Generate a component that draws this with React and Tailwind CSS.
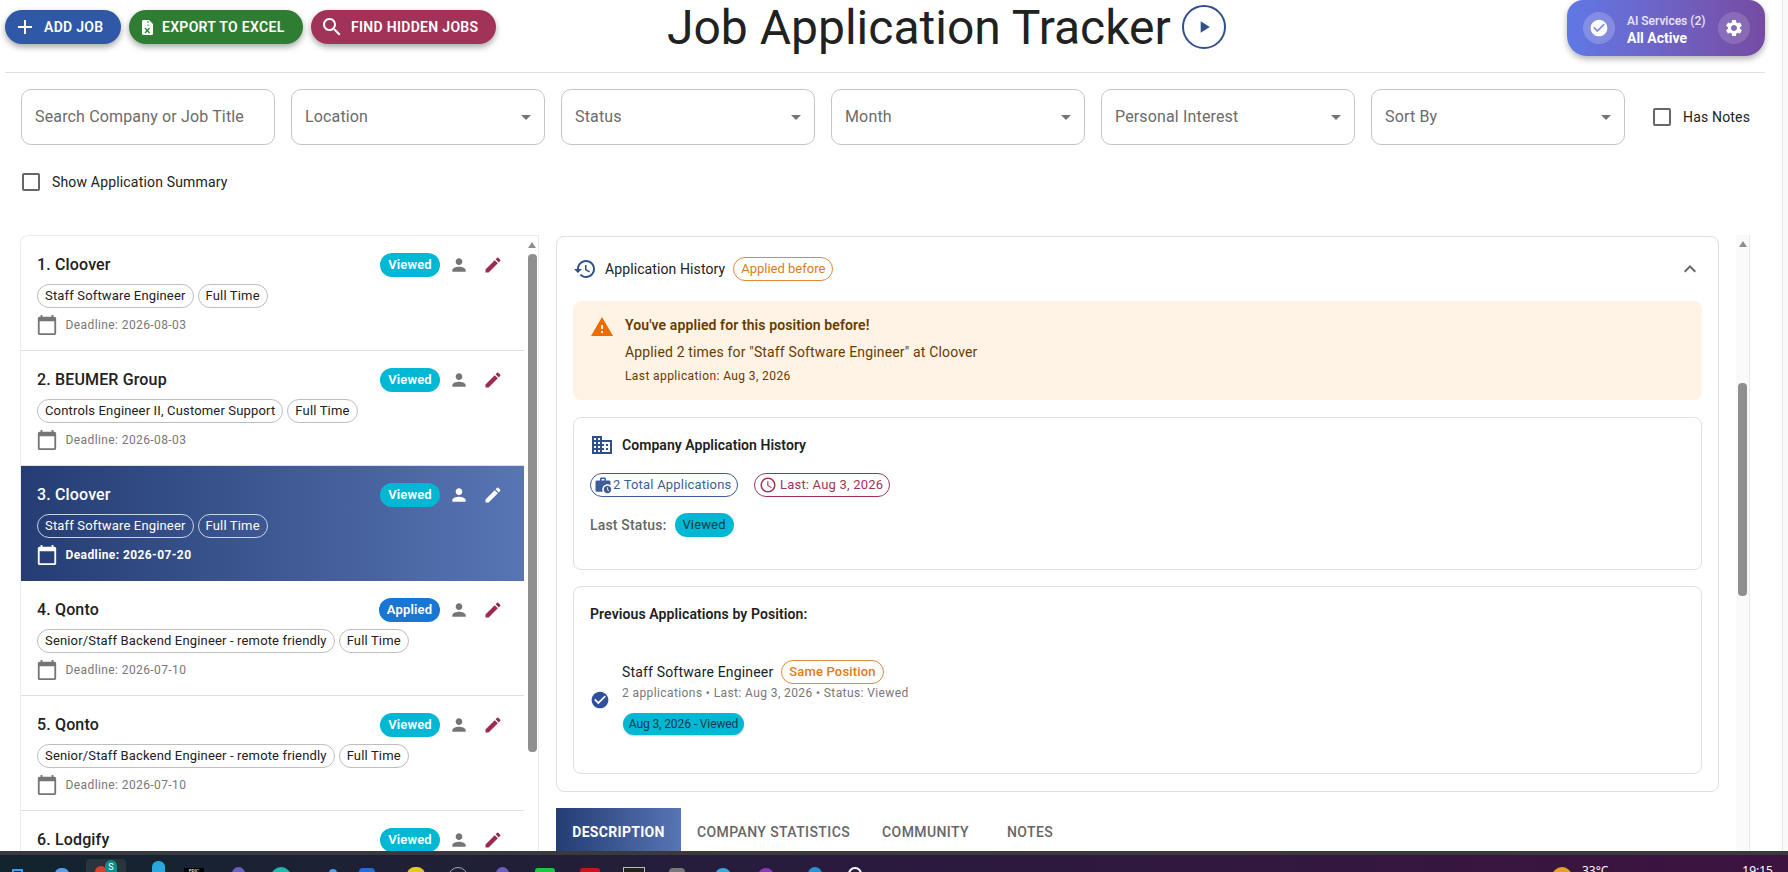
import React from "react";

const P = {
  add: "M19 13h-6v6h-2v-6H5v-2h6V5h2v6h6v2z",
  search: "M15.5 14h-.79l-.28-.27C15.41 12.59 16 11.11 16 9.5 16 5.91 13.09 3 9.5 3S3 5.91 3 9.5 5.91 16 9.5 16c1.61 0 3.09-.59 4.23-1.57l.27.28v.79l5 4.99L20.49 19l-4.99-5zm-6 0C7.01 14 5 11.99 5 9.5S7.01 5 9.5 5 14 7.01 14 9.5 11.99 14 9.5 14z",
  person: "M12 12c2.21 0 4-1.79 4-4s-1.79-4-4-4-4 1.79-4 4 1.79 4 4 4zm0 2c-2.67 0-8 1.34-8 4v2h16v-2c0-2.66-5.33-4-8-4z",
  edit: "M3 17.25V21h3.75L17.81 9.94l-3.75-3.75L3 17.25zM20.71 7.04c.39-.39.39-1.02 0-1.41l-2.34-2.34a.9959.9959 0 0 0-1.41 0l-1.83 1.83 3.75 3.75 1.83-1.83z",
  cal: "M20 3h-1V1h-2v2H7V1H5v2H4c-1.1 0-2 .9-2 2v16c0 1.1.9 2 2 2h16c1.1 0 2-.9 2-2V5c0-1.1-.9-2-2-2zm0 18H4V8h16v13z",
  history: "M13 3c-4.97 0-9 4.03-9 9H1l3.89 3.89.07.14L9 12H6c0-3.87 3.13-7 7-7s7 3.13 7 7-3.13 7-7 7c-1.93 0-3.68-.79-4.94-2.06l-1.42 1.42C8.27 19.99 10.51 21 13 21c4.97 0 9-4.03 9-9s-4.03-9-9-9zm-1 5v5l4.28 2.54.72-1.21-3.5-2.08V8H12z",
  less: "M12 8l-6 6 1.41 1.41L12 10.83l4.59 4.58L18 14z",
  warn: "M1 21h22L12 2 1 21zm12-3h-2v-2h2v2zm0-4h-2v-4h2v4z",
  biz: "M12 7V3H2v18h20V7H12zM6 19H4v-2h2v2zm0-4H4v-2h2v2zm0-4H4V9h2v2zm0-4H4V5h2v2zm4 12H8v-2h2v2zm0-4H8v-2h2v2zm0-4H8V9h2v2zm0-4H8V5h2v2zm10 12h-8v-2h2v-2h-2v-2h2v-2h-2V9h8v10zm-2-8h-2v2h2v-2zm0 4h-2v2h2v-2z",
  work: "M18 11c1.49 0 2.87.47 4 1.26V8c0-1.11-.89-2-2-2h-4V4c0-1.11-.89-2-2-2h-4c-1.11 0-2 .89-2 2v2H4c-1.11 0-1.99.89-1.99 2L2 19c0 1.11.89 2 2 2h7.68c-.43-.91-.68-1.92-.68-3 0-3.87 3.13-7 7-7zm-8-7h4v2h-4V4zM18 13c-2.76 0-5 2.24-5 5s2.24 5 5 5 5-2.24 5-5-2.24-5-5-5zm1.65 7.35L17.5 18.2V15h1v2.79l1.85 1.85-.7.71z",
  clock: "M11.99 2C6.47 2 2 6.48 2 12s4.47 10 9.99 10C17.52 22 22 17.52 22 12S17.52 2 11.99 2zM12 20c-4.42 0-8-3.58-8-8s3.58-8 8-8 8 3.58 8 8-3.58 8-8 8zm.5-13H11v6l5.25 3.15.75-1.23-4.5-2.67z",
  check: "M12 2C6.48 2 2 6.48 2 12s4.48 10 10 10 10-4.48 10-10S17.52 2 12 2zm-2 15l-5-5 1.41-1.41L10 14.17l7.59-7.59L19 8l-9 9z",
  gear: "M19.14 12.94c.04-.3.06-.61.06-.94 0-.32-.02-.64-.07-.94l2.03-1.58c.18-.14.23-.41.12-.61l-1.92-3.32c-.12-.22-.37-.29-.59-.22l-2.39.96c-.5-.38-1.03-.7-1.62-.94l-.36-2.54c-.04-.24-.24-.41-.48-.41h-3.84c-.24 0-.43.17-.47.41l-.36 2.54c-.59.24-1.13.57-1.62.94l-2.39-.96c-.22-.08-.47 0-.59.22L2.74 8.87c-.12.21-.08.47.12.61l2.03 1.58c-.05.3-.09.63-.09.94s.02.64.07.94l-2.03 1.58c-.18.14-.23.41-.12.61l1.92 3.32c.12.22.37.29.59.22l2.39-.96c.5.38 1.03.7 1.62.94l.36 2.54c.05.24.24.41.48.41h3.84c.24 0 .44-.17.47-.41l.36-2.54c.59-.24 1.13-.56 1.62-.94l2.39.96c.22.08.47 0 .59-.22l1.92-3.32c.12-.22.07-.47-.12-.61l-2.01-1.58zM12 15.6c-1.98 0-3.6-1.62-3.6-3.6s1.62-3.6 3.6-3.6 3.6 1.62 3.6 3.6-1.62 3.6-3.6 3.6z",
  play: "M8 5v14l11-7z",
  drop: "M7 10l5 5 5-5z",
};

const Icon = ({ d, className }) => (
  <svg viewBox="0 0 24 24" fill="currentColor" className={"shrink-0 " + className}>
    <path d={d} />
  </svg>
);

const ExcelIcon = () => (
  <svg viewBox="0 0 11 15" className="w-[11px] h-[15px] shrink-0">
    <path d="M0 1.5C0 .7.6 0 1.4 0H7l4 4v9.5c0 .8-.6 1.5-1.4 1.5H1.4C.6 15 0 14.3 0 13.5z" fill="#fff" />
    <path d="M3 8l4.6 5M7.6 8L3 13" stroke="#2e7d32" strokeWidth="1.3" fill="none" />
    <path d="M6 1v2M6 4.5v1.5" stroke="#2e7d32" strokeWidth="1" fill="none" />
  </svg>
);

const Field = ({ label, search }) => (
  <div className="w-[254px] h-[56px] shrink-0 border border-[#c4c4c4] rounded-[10px] flex items-center justify-between pl-[13px] pr-[6px] text-[16px] tracking-[0.15px] text-[#6b6b6b]">
    <span>{label}</span>
    {!search && <Icon d={P.drop} className="w-[24px] h-[24px] text-[#757575]" />}
  </div>
);

const Box = () => <div className="w-[18px] h-[18px] border-2 border-[#666] rounded-[2px] shrink-0" />;

const jobs = [
  { t: "1. Cloover", role: "Staff Software Engineer", d: "2026-08-03", s: "Viewed" },
  { t: "2. BEUMER Group", role: "Controls Engineer II, Customer Support", d: "2026-08-03", s: "Viewed" },
  { t: "3. Cloover", role: "Staff Software Engineer", d: "2026-07-20", s: "Viewed", sel: true },
  { t: "4. Qonto", role: "Senior/Staff Backend Engineer - remote friendly", d: "2026-07-10", s: "Applied" },
  { t: "5. Qonto", role: "Senior/Staff Backend Engineer - remote friendly", d: "2026-07-10", s: "Viewed" },
  { t: "6. Lodgify", s: "Viewed", partial: true },
];

const JobRow = ({ j }) => {
  const chip = j.sel
    ? "h-[24px] px-[7px] flex items-center rounded-full border border-[#c9d3e8] text-[13px] tracking-[0.16px] text-white"
    : "h-[24px] px-[7px] flex items-center rounded-full border border-[#bdbdbd] text-[13px] tracking-[0.16px] text-[#212121]";
  return (
    <div
      className={
        j.sel
          ? "h-[115px] shrink-0 pl-[16px] pr-[21px] pt-[17px] bg-gradient-to-r from-[#253d73] to-[#5875b4] text-white"
          : "h-[115px] shrink-0 pl-[16px] pr-[21px] pt-[17px] border-b border-[#e0e0e0] text-[#212121]"
      }
    >
      <div className="flex items-center h-[24px]">
        <div className="text-[16px] tracking-[0.15px] font-medium flex-1">{j.t}</div>
        <div className={(j.s === "Applied" ? "bg-[#1976d2] w-[61px]" : "bg-[#00b8d4] w-[60px]") + " h-[24px] rounded-full text-white text-[13px] tracking-[0.16px] font-semibold flex items-center justify-center"}>
          {j.s}
        </div>
        <Icon d={P.person} className={(j.sel ? "text-white" : "text-[#757575]") + " w-[20px] h-[20px] ml-[9px]"} />
        <Icon d={P.edit} className={(j.sel ? "text-white" : "text-[#9c2a54]") + " w-[20px] h-[20px] ml-[14px]"} />
      </div>
      {!j.partial && (
        <>
          <div className="flex gap-[4px] mt-[7px]">
            <div className={chip}>{j.role}</div>
            <div className={chip}>Full Time</div>
          </div>
          <div className="flex items-center mt-[6px]">
            <Icon d={P.cal} className={(j.sel ? "text-white" : "text-[#757575]") + " w-[22px] h-[22px] -ml-[1px]"} />
            <span className={j.sel ? "ml-[7.5px] text-[12px] font-bold tracking-[0.4px] text-white" : "ml-[7.5px] text-[12px] tracking-[0.4px] text-[#777]"}>
              Deadline: {j.d}
            </span>
          </div>
        </>
      )}
    </div>
  );
};

const Arrow = () => <div className="w-0 h-0 border-x-[4px] border-x-transparent border-b-[6px] border-b-[#8f8f8f]" />;

const Taskbar = () => (
  <div className="h-[21px] shrink-0 border-t-[4px] border-t-[#3a3a3e] bg-gradient-to-r from-[#12242e] via-[#2a1a3e] to-[#3d1340] flex items-start overflow-hidden text-white">
    <div className="ml-[11.5px] mt-[14px] w-[11px] h-[10px] border-2 border-[#3a9ff0]" />
    <div className="ml-[32.5px] mt-[13px] w-[14px] h-[10px] bg-[#5aa0e8] rounded-t-[6px]" />
    <div className="ml-[17px] mt-[4px] w-[40px] h-[20px] bg-[#2a343c] rounded-t-[4px] flex justify-center items-start pt-[7px]">
      <div className="w-[12px] h-[14px] bg-[#d8402e] rounded-t-full" />
      <div className="w-[12px] h-[14px] -ml-[2px] -mt-[6px] bg-[#0f8c8c] rounded-t-full text-[9px] leading-[14px] text-center">S</div>
    </div>
    <div className="ml-[25.5px] mt-[6px] w-[13px] h-[12px] bg-[#29a8e0] rounded-t-[6px]" />
    <div className="ml-[19.5px] mt-[13px] w-[20px] h-[10px] bg-black text-[5px] leading-[6px] text-center">EPIC</div>
    <div className="ml-[27.5px] mt-[12px] w-[13px] h-[10px] bg-[#6a5fc0] rounded-t-full" />
    <div className="ml-[26.5px] mt-[12px] w-[20px] h-[10px] bg-[#22b8b0] rounded-t-full" />
    <div className="ml-[38px] mt-[14px] w-[8px] h-[10px] bg-[#4aa0e0] rounded-t-full" />
    <div className="ml-[22px] mt-[13px] w-[16px] h-[10px] bg-[#1e70d8] rounded-t-[4px]" />
    <div className="ml-[32px] mt-[12px] w-[18px] h-[12px] bg-[#e8c828] rounded-t-[8px]" />
    <div className="ml-[23px] mt-[12px] w-[20px] h-[12px] border border-[#9ab] rounded-t-full" />
    <div className="ml-[27.5px] mt-[12px] w-[13px] h-[10px] bg-[#6a5fc0] rounded-t-full" />
    <div className="ml-[26.5px] mt-[13px] w-[20px] h-[12px] bg-[#1fc24a] rounded-t-[3px]" />
    <div className="ml-[25px] mt-[13px] w-[20px] h-[12px] bg-[#c8141e] rounded-t-[3px]" />
    <div className="ml-[23px] mt-[12px] w-[22px] h-[12px] bg-[#222] border border-[#bbb]" />
    <div className="ml-[24px] mt-[13px] w-[16px] h-[10px] bg-[#777] rounded-t-[4px]" />
    <div className="ml-[30px] mt-[13px] w-[16px] h-[10px] bg-[#3aa8d8] rounded-t-full" />
    <div className="ml-[27px] mt-[13px] w-[16px] h-[10px] bg-[#8a3ab8] rounded-t-full" />
    <div className="ml-[34px] mt-[12px] w-[14px] h-[12px] bg-[#2a90d8] rounded-t-[8px]" />
    <div className="ml-[26px] mt-[12px] w-[14px] h-[10px] border-2 border-white rounded-t-full" />
    <div className="ml-[690px] mt-[12px] w-[20px] h-[12px] bg-[#e8a028] rounded-t-full" />
    <div className="ml-[10px] mt-[8px] text-[12px] leading-[16px] font-['Noto_Sans',sans-serif]">33°C</div>
    <div className="ml-auto mr-[15px] mt-[8px] text-[12px] leading-[16px] font-['Noto_Sans',sans-serif]">19:15</div>
  </div>
);

export default function App() {
  return (
    <div className="w-[1788px] h-[872px] overflow-hidden bg-white flex flex-col font-['Roboto',sans-serif] text-[#212121]">
      <div className="flex flex-1 min-h-0">
        <div className="w-[1782px] shrink-0 flex flex-col min-h-0">
          {/* header */}
          <div className="ml-[5px] w-[1760px] h-[73px] shrink-0 border-b border-[#e0e0e0] flex items-start">
            <div className="flex gap-[8px] mt-[10px]">
              <div className="h-[34px] w-[116px] rounded-full bg-[#2f58a6] text-white flex items-center shadow-[0_3px_6px_rgba(0,0,0,0.35)] pl-[8px]">
                <Icon d={P.add} className="w-[24px] h-[24px]" />
                <span className="ml-[7px] text-[14px] font-semibold tracking-[0.3px]">ADD JOB</span>
              </div>
              <div className="h-[34px] w-[174px] rounded-full bg-[#2e7d32] text-white flex items-center shadow-[0_3px_6px_rgba(0,0,0,0.35)] pl-[13px]">
                <ExcelIcon />
                <span className="ml-[9px] text-[14px] font-semibold tracking-[0.3px]">EXPORT TO EXCEL</span>
              </div>
              <div className="h-[34px] w-[185px] rounded-full bg-[#a23358] text-white flex items-center shadow-[0_3px_6px_rgba(0,0,0,0.35)] pl-[9px]">
                <Icon d={P.search} className="w-[24px] h-[24px]" />
                <span className="ml-[7px] text-[14px] font-semibold tracking-[0.3px]">FIND HIDDEN JOBS</span>
              </div>
            </div>
            <div className="ml-[171px] text-[48px] font-normal leading-[56px] text-[#212121] whitespace-nowrap">Job Application Tracker</div>
            <div className="ml-[11px] mt-[5px] w-[44px] h-[44px] rounded-full border-2 border-[#2f4f8f] flex items-center justify-center text-[#2f4f8f]">
              <Icon d={P.play} className="w-[20px] h-[20px]" />
            </div>
            <div className="ml-auto w-[198px] h-[56px] rounded-b-[20px] rounded-t-[16px] bg-gradient-to-r from-[#5f78e6] to-[#764ba2] text-white flex items-center pl-[16px] shadow-[0_3px_6px_rgba(0,0,0,0.3)]">
              <div className="w-[32px] h-[32px] rounded-full bg-white/20 flex items-center justify-center">
                <Icon d={P.check} className="w-[20px] h-[20px]" />
              </div>
              <div className="ml-[12px] w-[91px] mt-[4px]">
                <div className="text-[12px] leading-[16px] font-medium text-white/85 whitespace-nowrap">AI Services (2)</div>
                <div className="text-[14px] leading-[18px] font-bold whitespace-nowrap">All Active</div>
              </div>
              <div className="w-[32px] h-[32px] rounded-full bg-white/15 flex items-center justify-center">
                <Icon d={P.gear} className="w-[20px] h-[20px]" />
              </div>
            </div>
          </div>
          {/* filters */}
          <div className="flex items-center gap-[16px] pl-[21px] mt-[16px] shrink-0">
            <Field label="Search Company or Job Title" search />
            <Field label="Location" />
            <Field label="Status" />
            <Field label="Month" />
            <Field label="Personal Interest" />
            <Field label="Sort By" />
            <div className="flex items-center ml-[12px]">
              <Box />
              <span className="ml-[12px] text-[14px] tracking-[0.17px] whitespace-nowrap">Has Notes</span>
            </div>
          </div>
          <div className="flex items-center pl-[22px] mt-[28px] h-[18px] shrink-0">
            <Box />
            <span className="ml-[12px] text-[14px] tracking-[0.17px]">Show Application Summary</span>
          </div>
          {/* panels */}
          <div className="flex mt-[44px] pl-[20px] flex-1 min-h-0">
            <div className="w-[519px] shrink-0 flex border-t border-l border-r border-[#ececec] rounded-tl-[8px]">
              <div className="w-[503px] shrink-0 flex flex-col overflow-hidden">
                {jobs.map((j) => (
                  <JobRow key={j.t} j={j} />
                ))}
              </div>
              <div className="w-[14px] shrink-0 flex flex-col items-center pt-[6px] pl-[2px]">
                <Arrow />
                <div className="w-[9px] h-[498px] mt-[6px] rounded-[4px] bg-[#8f8f8f]" />
              </div>
            </div>
            <div className="w-[1211px] shrink-0 flex border-r border-[#e8e8e8] min-h-0">
              <div className="w-[1197px] shrink-0 flex flex-col pl-[17px] pt-[1px] overflow-hidden">
                <div className="w-[1163px] h-[556px] shrink-0 border border-[#e0e0e0] rounded-[8px]">
                  <div className="h-[64px] flex items-center pl-[16px] pr-[16px]">
                    <Icon d={P.history} className="w-[24px] h-[24px] text-[#2f4f8f]" />
                    <span className="ml-[8px] text-[14px] tracking-[0.1px]">Application History</span>
                    <div className="ml-[8px] h-[24px] px-[7px] rounded-full border border-[#e0883c] text-[#e07b20] text-[13px] flex items-center">Applied before</div>
                    <Icon d={P.less} className="ml-auto w-[24px] h-[24px] text-[#666]" />
                  </div>
                  <div className="mx-[16px] h-[99px] rounded-[8px] bg-[#fff3e5] flex pl-[17px] pt-[14px]">
                    <Icon d={P.warn} className="w-[24px] h-[24px] text-[#ed6c02]" />
                    <div className="ml-[11px] text-[#663c00]">
                      <div className="text-[14px] leading-[20px] font-semibold tracking-[0.1px]">You've applied for this position before!</div>
                      <div className="text-[14px] leading-[20px] mt-[7px] tracking-[0.15px]">Applied 2 times for "Staff Software Engineer" at Cloover</div>
                      <div className="text-[12px] leading-[16px] mt-[6px] tracking-[0.4px]">Last application: Aug 3, 2026</div>
                    </div>
                  </div>
                  <div className="mx-[16px] mt-[17px] h-[153px] border border-[#e0e0e0] rounded-[8px] pl-[16px] pt-[15px]">
                    <div className="flex items-center h-[24px]">
                      <Icon d={P.biz} className="w-[24px] h-[24px] text-[#2f4f8f]" />
                      <span className="ml-[8px] text-[14px] font-semibold tracking-[0.05px]">Company Application History</span>
                    </div>
                    <div className="flex mt-[16px] gap-[16px]">
                      <div className="h-[24px] w-[148px] rounded-full border border-[#3d5c99] text-[#3d5c99] text-[13px] flex items-center pl-[3px] tracking-[0.2px]">
                        <Icon d={P.work} className="w-[18px] h-[18px] mr-[1px]" />2 Total Applications
                      </div>
                      <div className="h-[24px] w-[136px] rounded-full border border-[#a23358] text-[#a23358] text-[13px] flex items-center pl-[4px] tracking-[0.2px]">
                        <Icon d={P.clock} className="w-[18px] h-[18px] mr-[3px]" />Last: Aug 3, 2026
                      </div>
                    </div>
                    <div className="flex items-center mt-[16px]">
                      <span className="text-[14px] font-medium text-[#666] tracking-[0.17px]">Last Status:</span>
                      <div className="ml-[8px] w-[59px] h-[24px] rounded-full bg-[#00b8d4] text-[#0b3c46] text-[13px] tracking-[0.16px] flex items-center justify-center">Viewed</div>
                    </div>
                  </div>
                  <div className="mx-[16px] mt-[16px] h-[188px] border border-[#e0e0e0] rounded-[8px] pl-[16px] pt-[17px]">
                    <div className="text-[14px] leading-[20px] font-semibold tracking-[0.1px]">Previous Applications by Position:</div>
                    <div className="flex items-center mt-[36px]">
                      <Icon d={P.check} className="w-[20px] h-[20px] text-[#2f4f9f] mt-[5px]" />
                      <div className="ml-[12px]">
                        <div className="flex items-center h-[24px]">
                          <span className="text-[14px] tracking-[0.17px]">Staff Software Engineer</span>
                          <div className="ml-[8px] h-[24px] px-[7px] rounded-full border border-[#e0883c] text-[#e07b20] text-[13px] tracking-[0.16px] font-medium flex items-center">Same Position</div>
                        </div>
                        <div className="text-[12px] leading-[16px] mt-[1px] text-[#777] tracking-[0.4px]">2 applications • Last: Aug 3, 2026 • Status: Viewed</div>
                        <div className="mt-[12px] ml-[1px] w-[121px] h-[22px] rounded-full bg-[#00b8d4] text-[#0b3c46] text-[12px] tracking-[-0.1px] flex items-center justify-center shadow-[0_1px_2px_rgba(0,0,0,0.2)]">Aug 3, 2026 - Viewed</div>
                      </div>
                    </div>
                  </div>
                </div>
                <div className="flex mt-[16px] h-[48px] shrink-0 text-[14px] font-medium tracking-[0.4px] text-[#666]">
                  <div className="w-[125px] bg-gradient-to-r from-[#253d73] to-[#5875b4] text-white font-bold flex items-center justify-center tracking-[0.3px]">DESCRIPTION</div>
                  <div className="ml-[16px] flex items-center">COMPANY STATISTICS</div>
                  <div className="ml-[32px] flex items-center">COMMUNITY</div>
                  <div className="ml-[38px] flex items-center">NOTES</div>
                </div>
              </div>
              <div className="w-[13px] shrink-0 flex flex-col items-center pt-[6px] bg-[#fafafa]">
                <Arrow />
                <div className="w-[9px] h-[213px] mt-[136px] rounded-[4px] bg-[#8f8f8f]" />
              </div>
            </div>
          </div>
        </div>
        <div className="flex-1 border-l border-[#e6e6e6] bg-[#f9f9f9]" />
      </div>
      <Taskbar />
    </div>
  );
}
